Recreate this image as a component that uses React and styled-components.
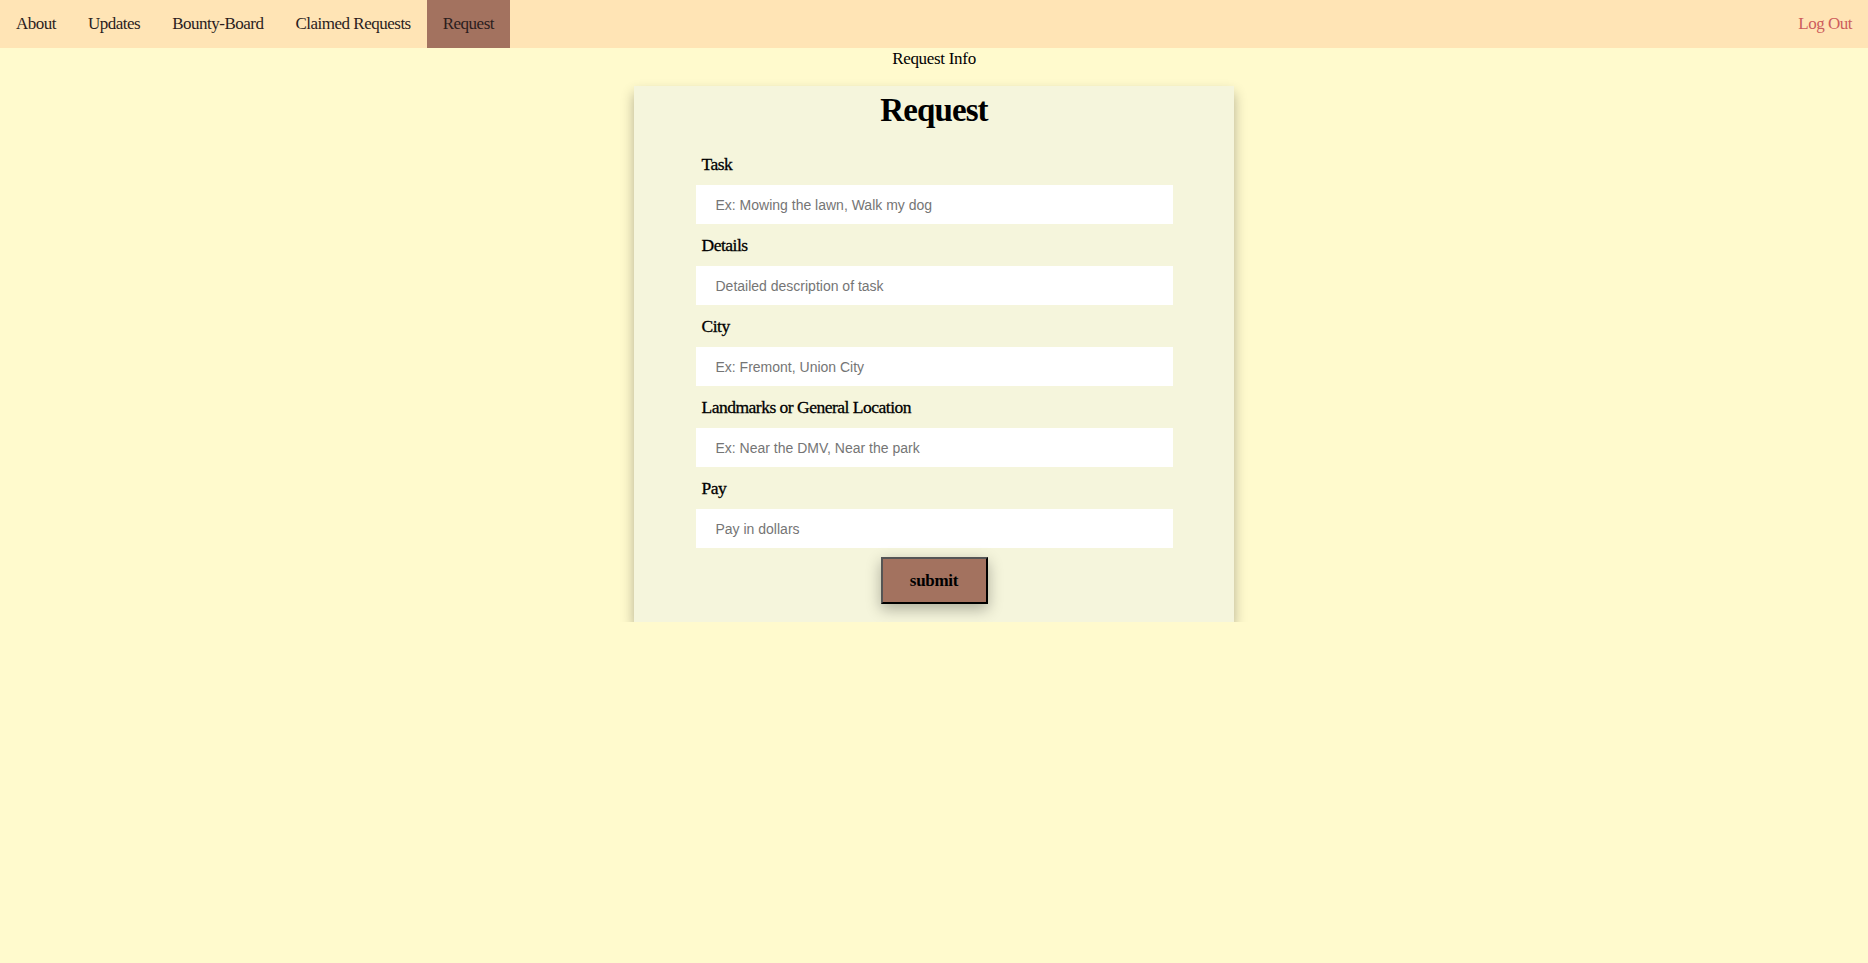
import styled, { createGlobalStyle } from "styled-components";

const GlobalStyle = createGlobalStyle`
  body {
    margin: 0;
    background-color: #fffacd;
    font-family: "Liberation Serif", serif;
  }
`;

const Nav = styled.nav`
  display: flex;
  align-items: stretch;
  height: 48px;
  background-color: #ffe4b5;
`;

const NavLink = styled.a`
  display: flex;
  align-items: center;
  padding: 0 16px;
  font-size: 17px;
  letter-spacing: -0.5px;
  color: ${(p) => (p.$logout ? "#cd5c5c" : "#2b1d1d")};
  background-color: ${(p) => (p.$active ? "#a3725f" : "transparent")};
  margin-left: ${(p) => (p.$logout ? "auto" : "0")};
  text-decoration: none;
  cursor: pointer;
`;

const PageTitle = styled.div`
  text-align: center;
  font-size: 17px;
  line-height: 22px;
  letter-spacing: -0.3px;
  color: #000;
`;

const Card = styled.div`
  width: 600px;
  margin: 16px auto 0;
  padding: 4px 0 18px;
  background-color: #f5f5dc;
  box-shadow: 0 7px 12px rgba(0, 0, 0, 0.3);
  display: flex;
  flex-direction: column;
  align-items: center;
`;

const Title = styled.h1`
  margin: 0 0 13px;
  font-size: 33px;
  line-height: 40px;
  letter-spacing: -0.9px;
  font-weight: bold;
`;

const Form = styled.form`
  width: 477px;
  display: flex;
  flex-direction: column;
`;

const Label = styled.label`
  display: block;
  padding-left: 6px;
  font-size: 17.5px;
  line-height: 42px;
  letter-spacing: -0.5px;
  font-weight: normal;
  -webkit-text-stroke: 0.3px #000;
  color: #000;
`;

const Input = styled.input`
  box-sizing: border-box;
  width: 100%;
  height: 39px;
  border: none;
  outline: none;
  padding: 0 20px;
  background: #fff;
  font-family: "Liberation Sans", Arial, sans-serif;
  font-size: 14px;

  &::placeholder {
    color: #757575;
  }
`;

const Button = styled.button`
  align-self: center;
  margin-top: 9px;
  width: 107px;
  height: 47px;
  background-color: #a3725f;
  border: 2px solid;
  border-color: #555 #000 #000 #555;
  box-shadow: 0 5px 14px rgba(0, 0, 0, 0.3);
  font-family: "Liberation Serif", serif;
  font-size: 17px;
  font-weight: 600;
  letter-spacing: -0.3px;
  color: #000;
  cursor: pointer;
`;

const fields = [
  { name: "task", label: "Task", placeholder: "Ex: Mowing the lawn, Walk my dog" },
  { name: "details", label: "Details", placeholder: "Detailed description of task" },
  { name: "city", label: "City", placeholder: "Ex: Fremont, Union City" },
  {
    name: "location",
    label: "Landmarks or General Location",
    placeholder: "Ex: Near the DMV, Near the park",
  },
  { name: "pay", label: "Pay", placeholder: "Pay in dollars" },
];

const App = () => {
  const handleSubmit = (e) => {
    e.preventDefault();
  };

  return (
    <>
      <GlobalStyle />
      <Nav>
        <NavLink>About</NavLink>
        <NavLink>Updates</NavLink>
        <NavLink>Bounty-Board</NavLink>
        <NavLink>Claimed Requests</NavLink>
        <NavLink $active>Request</NavLink>
        <NavLink $logout>Log Out</NavLink>
      </Nav>
      <PageTitle>Request Info</PageTitle>
      <Card>
        <Title>Request</Title>
        <Form onSubmit={handleSubmit}>
          {fields.map((f) => (
            <div key={f.name}>
              <Label htmlFor={f.name}>{f.label}</Label>
              <Input id={f.name} name={f.name} placeholder={f.placeholder} />
            </div>
          ))}
          <Button type="submit">submit</Button>
        </Form>
      </Card>
    </>
  );
};

export default App;
